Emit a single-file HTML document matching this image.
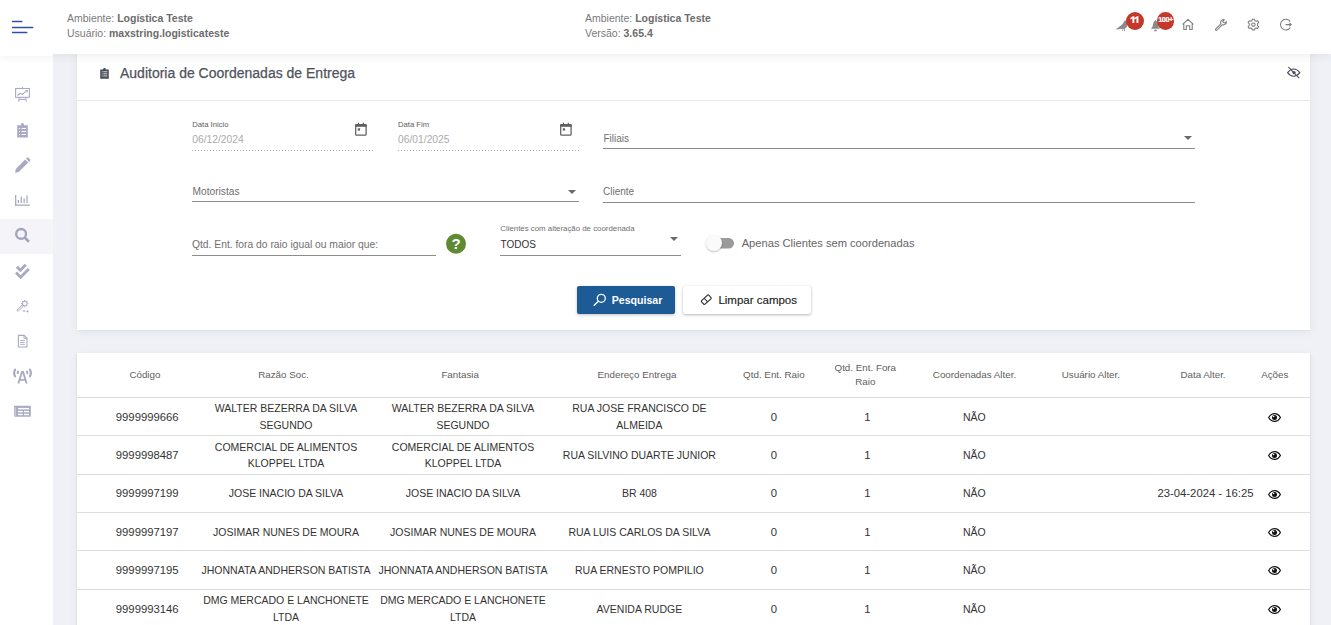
<!DOCTYPE html>
<html><head><meta charset="utf-8">
<style>
*{box-sizing:border-box;margin:0;padding:0}
html,body{width:1331px;height:625px;overflow:hidden}
body{position:relative;background:#f0f1f6;font-family:"Liberation Sans",sans-serif;color:#333}
.a{position:absolute;white-space:nowrap;line-height:1}
#hdr{position:absolute;left:0;top:0;width:1331px;height:54px;background:#fff;box-shadow:0 2px 9px rgba(0,0,0,.07);z-index:5}
#side{position:absolute;left:0;top:54px;width:53px;height:571px;background:#fff;z-index:3}
.card{position:absolute;left:77px;width:1233px;background:#fff;box-shadow:0 1px 1px rgba(0,0,0,.03),0 2px 10px rgba(0,0,0,.06)}
.ul{position:absolute;height:1px;background:#8c8c8c}
.dot{position:absolute;height:1px;background-image:linear-gradient(to right,#a6a6a6 0 1px,transparent 1px 3px);background-size:3px 1px}
.tri{position:absolute;width:0;height:0;border-left:4px solid transparent;border-right:4px solid transparent;border-top:4px solid #6a6a6a}
.hl{color:#7a7a7a}
.hb{color:#6c6c6c;font-weight:bold}
svg{position:absolute;overflow:visible}
.lbl{color:#5c5c5c}
.ph{color:#707070}
.badge{position:absolute;width:18px;height:18px;border-radius:50%;background:#c4372b;color:#fff;font-weight:bold;text-align:center;line-height:18px}
.tr{position:absolute;left:0;width:1233px;border-bottom:1px solid #dedede}
.td{position:absolute;top:0;height:100%;display:flex;align-items:center;justify-content:center;text-align:center;font-size:10.5px;line-height:16.6px;color:#333;padding-top:1px}
.td.num{font-size:11.3px}
.th .td{font-size:9.8px;line-height:13.7px;color:#606060;padding-top:0}
</style></head><body>

<div id="hdr">
  <svg style="left:0;top:0" width="60" height="54">
    <g stroke="#2f50a6" stroke-width="1.4" stroke-linecap="round">
      <line x1="12.5" y1="21.5" x2="21.8" y2="21.5"/>
      <line x1="12.5" y1="27.5" x2="32.8" y2="27.5"/>
      <line x1="12.5" y1="32.5" x2="26.8" y2="32.5"/>
    </g>
  </svg>
  <div class="a" style="left:67px;top:13px;font-size:10.5px"><span class="hl">Ambiente: </span><span class="hb">Logística Teste</span></div>
  <div class="a" style="left:67px;top:28px;font-size:10.5px"><span class="hl">Usuário: </span><span class="hb">maxstring.logisticateste</span></div>
  <div class="a" style="left:585px;top:13px;font-size:10.5px"><span class="hl">Ambiente: </span><span class="hb">Logística Teste</span></div>
  <div class="a" style="left:585px;top:28px;font-size:10.5px"><span class="hl">Versão: </span><span class="hb">3.65.4</span></div>

  <!-- bird -->
  <svg style="left:0;top:0" width="1331" height="54">
    <path d="M1115.6 29.6 L1122.2 24.4 C1123 23.6 1123.6 22.8 1124 21.6 C1124.3 20.6 1125.2 20.2 1126 20.6 L1127.2 22 L1127 26.2 C1126.6 27.4 1125.6 28.2 1124.8 28.6 L1124.8 31 L1124 31 L1124 28.8 L1123.2 28.9 L1123.2 31 L1122.4 31 L1122.4 28.8 C1120 29 1117.8 29.4 1115.6 29.6Z" fill="#8a8a8a"/>
    <!-- bell -->
    <path d="M1155.5 20 C1153.6 21.5 1153 23.5 1152.8 25.8 C1152.6 27 1151.8 27.9 1150.8 28.7 L1160 28.7 C1159 27.9 1158.4 27 1158.2 25.8 C1158 23.5 1157.4 21.5 1155.5 20Z" fill="#8a8a8a"/>
    <ellipse cx="1155.5" cy="30.4" rx="1.4" ry="0.9" fill="#8a8a8a"/>
    <!-- home -->
    <path d="M1182.6 24.4 L1188 19.4 L1193.4 24.4 M1183.8 23.4 V29.5 H1186.3 V25.8 H1189.7 V29.5 H1192.2 V23.4" fill="none" stroke="#7c7c7c" stroke-width="1.05" stroke-linejoin="round"/>
    <!-- wrench -->
    <path d="M1215.6 29.1 L1220.9 23.8 C1220.3 22.4 1220.7 20.9 1221.9 20.1 C1222.7 19.6 1223.6 19.5 1224.4 19.7 L1222.8 21.4 L1223.6 22.6 L1225 22.9 L1226.3 21.5 C1226.5 22.5 1226.2 23.5 1225.4 24.2 C1224.6 24.9 1223.5 25 1222.5 24.7 L1217.2 30 C1216.7 30.4 1216 30.3 1215.6 29.9 C1215.3 29.6 1215.3 29.4 1215.6 29.1Z" fill="none" stroke="#7c7c7c" stroke-width="1.05" stroke-linejoin="round"/>
    <!-- gear -->
    <g transform="translate(1253.4 24.6)" fill="none" stroke="#7c7c7c" stroke-width="1.05" stroke-linejoin="round">
      <path d="M-1.1 -5.4 L1.1 -5.4 L1.5 -3.9 L2.7 -3.3 L4.2 -3.9 L5.3 -2 L4.1 -1 L4.1 1 L5.3 2 L4.2 3.9 L2.7 3.3 L1.5 3.9 L1.1 5.4 L-1.1 5.4 L-1.5 3.9 L-2.7 3.3 L-4.2 3.9 L-5.3 2 L-4.1 1 L-4.1 -1 L-5.3 -2 L-4.2 -3.9 L-2.7 -3.3 L-1.5 -3.9Z"/>
      <circle r="1.7"/>
    </g>
    <!-- logout -->
    <path d="M1290.2 21.6 A5.3 5.3 0 1 0 1290.2 27.6" fill="none" stroke="#7c7c7c" stroke-width="1.05"/>
    <path d="M1285.6 24.6 H1291.2 M1289.4 22.9 L1291.2 24.6 L1289.4 26.3" fill="none" stroke="#7c7c7c" stroke-width="1.05"/>
  </svg>
  <div class="badge" style="left:1126.2px;top:12px"></div>
  <svg style="left:0;top:0;z-index:7" width="1331" height="54"><path d="M1130.4 17.8 L1133 16.2 H1134.3 V23 H1132.4 V18.5 L1130.4 19.6Z M1134.5 17.8 L1137.1 16.2 H1138.4 V23 H1136.5 V18.5 L1134.5 19.6Z" fill="#fff"/></svg>
  <div class="badge" style="left:1156.5px;top:12px;width:17.5px;height:17.5px;font-size:7px;letter-spacing:-0.45px;line-height:16px;text-indent:0.5px;font-size:7.3px;-webkit-text-stroke:0.2px #fff">100+</div>
</div>

<div style="position:absolute;left:0;top:54px;width:53px;height:2px;background:#fff;z-index:6"></div>
<div id="side">
  <div style="position:absolute;left:0;top:165px;width:53px;height:35px;background:#f5f5f9"></div>
  <svg style="left:0;top:-54px" width="53" height="625">
    <g fill="none" stroke="#a8aac3" stroke-width="1.1">
      <!-- presentation -->
      <rect x="15.6" y="88.5" width="13.8" height="8.8"/>
      <line x1="22.5" y1="87" x2="22.5" y2="88.5"/>
      <polyline points="17.4,95.5 20.2,93.2 22.3,94.4 26.6,90.8"/>
      <line x1="19.5" y1="99.4" x2="25.5" y2="99.4"/>
      <line x1="19.3" y1="97.5" x2="18.7" y2="101.6"/>
      <line x1="25.7" y1="97.5" x2="26.3" y2="101.6"/>
    </g>
    <path d="M25.2 90 L27.8 90 L27.8 92.6Z" fill="#a8aac3"/>
    <!-- clipboard -->
    <path d="M17.2 125.2 H21 C21 123.9 21.6 123 22.5 123 C23.4 123 24 123.9 24 125.2 H27.8 V137.6 H17.2Z" fill="#a8aac3"/>
    <g fill="#fff"><rect x="19" y="128" width="1" height="1"/><rect x="19" y="131" width="1" height="1"/><rect x="19" y="134" width="1" height="1"/>
    <rect x="21.5" y="128" width="4.5" height="1"/><rect x="21.5" y="131" width="4.5" height="1"/><rect x="21.5" y="134" width="4.5" height="1"/></g>
    <!-- pencil -->
    <path d="M15.1 172.7 L15.8 169 L25.2 159.6 L28.2 162.6 L18.8 172Z" fill="#a8aac3"/>
    <path d="M26 158.8 L26.9 157.9 C27.4 157.4 28.1 157.4 28.6 157.9 L30 159.3 C30.5 159.8 30.5 160.5 30 161 L29.1 161.9Z" fill="#a8aac3"/>
    <!-- bar chart -->
    <g fill="#a8aac3">
      <rect x="15" y="195" width="1.3" height="10.8"/>
      <rect x="15" y="204.5" width="15" height="1.3"/>
      <rect x="17.7" y="200" width="1.3" height="3"/>
      <rect x="20.6" y="196.5" width="1.3" height="6.5"/>
      <rect x="23.5" y="198.5" width="1.3" height="4.5"/>
      <rect x="26.4" y="195.5" width="1.3" height="7.5"/>
    </g>
    <!-- search -->
    <circle cx="21.1" cy="233.9" r="4.9" fill="none" stroke="#a2a4bf" stroke-width="2.4"/>
    <line x1="24.8" y1="237.6" x2="28.9" y2="241.7" stroke="#a2a4bf" stroke-width="2.7"/>
    <!-- double check -->
    <polyline points="16.8,266.8 20.3,270.3 25.8,264.8" fill="none" stroke="#a8aac3" stroke-width="2.8"/>
    <polyline points="16,272.6 20.6,277.2 28.8,269" fill="none" stroke="#a8aac3" stroke-width="2.8"/>
    <!-- magic wand -->
    <g fill="none" stroke="#a8aac3" stroke-width="1">
      <path d="M22.6 304.6 L16.9 310.3 L18 311.4 L23.7 305.7"/>
      <circle cx="24.7" cy="303.6" r="2.3"/>
    </g>
    <g stroke="#a8aac3" stroke-width="1.2">
      <line x1="24.7" y1="300" x2="24.7" y2="301"/><line x1="24.7" y1="306.2" x2="24.7" y2="307.2"/>
      <line x1="21.1" y1="303.6" x2="22.1" y2="303.6"/><line x1="27.3" y1="303.6" x2="28.3" y2="303.6"/>
      <line x1="22.2" y1="301.1" x2="22.9" y2="301.8"/><line x1="26.5" y1="305.4" x2="27.2" y2="306.1"/>
      <line x1="27.2" y1="301.1" x2="26.5" y2="301.8"/><line x1="22.9" y1="305.4" x2="22.2" y2="306.1"/>
    </g>
    <path d="M24 309.5 L24.5 310.5 L25.5 311 L24.5 311.5 L24 312.5 L23.5 311.5 L22.5 311 L23.5 310.5Z M27.5 310 L28 311 L29 311.5 L28 312 L27.5 313 L27 312 L26 311.5 L27 311Z" fill="#a8aac3"/>
    <!-- document -->
    <path d="M18.4 335.4 H24.2 L27 338.2 V347 H18.4Z" fill="none" stroke="#a8aac3" stroke-width="1.1"/>
    <path d="M24 335.5 V338.4 H27" fill="none" stroke="#a8aac3" stroke-width="1"/>
    <g fill="#a8aac3"><rect x="20.2" y="340.1" width="4.6" height="0.9"/><rect x="20.2" y="342" width="4.6" height="0.9"/><rect x="20.2" y="343.9" width="4.6" height="0.9"/></g>
    <!-- antenna -->
    <g fill="none" stroke="#a8aac3" stroke-width="2" stroke-linecap="round">
      <path d="M15.1 369.6 C13.8 371.7 13.8 374.3 15.1 376.4"/>
      <path d="M29.9 369.6 C31.2 371.7 31.2 374.3 29.9 376.4"/>
      <path d="M18 371.5 L17.7 373.2"/>
      <path d="M27 371.5 L27.3 373.2"/>
    </g>
    <path d="M21.3 371 H23.7 L27.6 383.6 H25.6 L24.8 380.8 H20.2 L19.4 383.6 H17.4Z M20.8 379 H24.2 L22.5 373.2Z" fill="#a8aac3" fill-rule="evenodd"/>
    <!-- table -->
    <rect x="14.2" y="405.8" width="16.6" height="10.9" rx="0.8" fill="#a8aac3"/>
    <g fill="#fff">
      <rect x="18" y="407.9" width="11" height="1.5"/>
      <rect x="18" y="410.9" width="4.8" height="1.4"/>
      <rect x="24" y="410.9" width="5" height="1.4"/>
      <rect x="18" y="413.8" width="4.8" height="1.4"/>
      <rect x="24" y="413.8" width="5" height="1.4"/>
      <rect x="15.3" y="407.5" width="0.8" height="8.2" opacity="0.55"/>
    </g>
  </svg>
</div>

<!-- card 1 -->
<div class="card" style="top:40px;height:290px">
  <div style="position:absolute;left:0;top:60px;width:1233px;height:1px;background:#e6e7ec"></div>
</div>
<svg style="left:0;top:0;z-index:2" width="1331" height="625">
  <!-- clipboard title icon -->
  <path d="M100.2 69.6 H103 C103 68.7 103.6 68 104.5 68 C105.4 68 106 68.7 106 69.6 H108.8 V78.8 H100.2Z" fill="#4b4e58"/>
  <g fill="#fff" opacity="0.85"><rect x="101.7" y="71.3" width="0.9" height="0.9"/><rect x="101.7" y="73.4" width="0.9" height="0.9"/><rect x="101.7" y="75.5" width="0.9" height="0.9"/><rect x="103.3" y="71.3" width="4" height="0.9"/><rect x="103.3" y="73.4" width="4" height="0.9"/><rect x="103.3" y="75.5" width="4" height="0.9"/></g>
  <!-- eye slash -->
  <g fill="none" stroke="#4b4e58" stroke-width="1.1">
    <path d="M1287.6 72.6 C1289.4 70.2 1291.5 69 1293.7 69 C1295.9 69 1298 70.2 1299.8 72.6 C1298 75 1295.9 76.2 1293.7 76.2 C1291.5 76.2 1289.4 75 1287.6 72.6Z"/>
    <line x1="1288.4" y1="67.2" x2="1299.2" y2="78.2"/>
  </g>
  <circle cx="1294" cy="72.6" r="1.6" fill="#4b4e58"/>
  <!-- calendar icons -->
  <g fill="none" stroke="#5f5f5f" stroke-width="1.25">
    <rect x="355.7" y="124.7" width="10.4" height="10.4" rx="0.9"/>
    <rect x="560.7" y="124.7" width="10.4" height="10.4" rx="0.9"/>
  </g>
  <g fill="#5f5f5f">
    <rect x="355.2" y="124.2" width="11.4" height="2.6"/>
    <rect x="357.9" y="122.7" width="1.2" height="2"/><rect x="362.7" y="122.7" width="1.2" height="2"/>
    <rect x="357.8" y="128.3" width="2.3" height="2.3"/>
    <rect x="560.2" y="124.2" width="11.4" height="2.6"/>
    <rect x="562.9" y="122.7" width="1.2" height="2"/><rect x="567.7" y="122.7" width="1.2" height="2"/>
    <rect x="562.8" y="128.3" width="2.3" height="2.3"/>
  </g>
  <!-- help circle -->
  <circle cx="456" cy="243.8" r="10" fill="#5e8a31"/>
  <!-- toggle -->
  <rect x="708" y="238" width="26" height="10.6" rx="5.3" fill="#9a9a9a"/>
</svg>
<div style="position:absolute;left:705.7px;top:235px;width:16px;height:16px;border-radius:50%;background:#fafafa;box-shadow:0 1px 2px rgba(0,0,0,.25);z-index:2"></div>
<div class="a" style="left:450.6px;top:235.6px;width:10.8px;text-align:center;font-size:15px;font-weight:bold;color:#fff;z-index:3">?</div>

<!-- form text -->
<div style="position:absolute;left:0;top:0;z-index:2">
  <div class="a" style="left:120px;top:66px;font-size:14px;color:#50535c;-webkit-text-stroke:0.25px #50535c">Auditoria de Coordenadas de Entrega</div>

  <div class="a lbl" style="left:192.2px;top:120.7px;font-size:7.7px">Data Inicio</div>
  <div class="a" style="left:192.2px;top:134.7px;font-size:10.3px;color:#ababab">06/12/2024</div>
  <div class="dot" style="left:192px;top:150px;width:181px"></div>

  <div class="a lbl" style="left:398px;top:120.7px;font-size:7.7px">Data Fim</div>
  <div class="a" style="left:398px;top:134.7px;font-size:10.3px;color:#ababab">06/01/2025</div>
  <div class="dot" style="left:398px;top:150px;width:181px"></div>

  <div class="a ph" style="left:603.4px;top:133.9px;font-size:10px">Filiais</div>
  <div class="ul" style="left:603px;top:148px;width:592px"></div>
  <div class="tri" style="left:1184px;top:136px"></div>

  <div class="a ph" style="left:192.5px;top:187px;font-size:10.2px">Motoristas</div>
  <div class="ul" style="left:192px;top:201px;width:387px"></div>
  <div class="tri" style="left:568px;top:190px"></div>

  <div class="a ph" style="left:603px;top:186.5px;font-size:10px">Cliente</div>
  <div class="ul" style="left:603px;top:202px;width:592px"></div>

  <div class="a ph" style="left:192px;top:239.5px;font-size:10.3px">Qtd. Ent. fora do raio igual ou maior que:</div>
  <div class="ul" style="left:192px;top:255px;width:244px"></div>

  <div class="a ph" style="left:500.3px;top:225px;font-size:7.85px">Clientes com alteração de coordenada</div>
  <div class="a" style="left:500.5px;top:240px;font-size:10px;color:#333">TODOS</div>
  <div class="ul" style="left:500px;top:255px;width:181px"></div>
  <div class="tri" style="left:669.5px;top:237px;border-left-width:4.8px;border-right-width:4.8px;border-top-width:4px"></div>

  <div class="a" style="left:741.7px;top:237.6px;font-size:11.15px;color:#666">Apenas Clientes sem coordenadas</div>

  <!-- buttons -->
  <div style="position:absolute;left:577px;top:286px;width:98px;height:28px;background:#1d5b97;border-radius:2px;box-shadow:0 1px 3px rgba(0,0,0,.25)"></div>
  <svg style="left:0;top:0" width="1331" height="625">
    <circle cx="601.3" cy="298.3" r="4" fill="none" stroke="#fff" stroke-width="1.3"/>
    <line x1="598.4" y1="301.2" x2="594.2" y2="305.2" stroke="#fff" stroke-width="1.4" stroke-linecap="round"/>
  </svg>
  <div class="a" style="left:611.7px;top:295.4px;font-size:10.6px;font-weight:bold;color:#fff">Pesquisar</div>

  <div style="position:absolute;left:683px;top:286px;width:128px;height:28px;background:#fff;border-radius:2px;box-shadow:0 1px 3px rgba(0,0,0,.28),0 0 1px rgba(0,0,0,.10)"></div>
  <svg style="left:0;top:0" width="1331" height="625">
    <g transform="translate(706.3 299.7) rotate(-42)"><rect x="-4.9" y="-2.5" width="9.8" height="5" rx="0.9" fill="none" stroke="#222" stroke-width="1.05"/><line x1="-0.6" y1="-2.5" x2="-0.6" y2="2.5" stroke="#222" stroke-width="1"/></g>
    
  </svg>
  <div class="a" style="left:718.4px;top:295.4px;font-size:11.5px;color:#222;-webkit-text-stroke:0.15px #222">Limpar campos</div>
</div>

<!-- card 2 -->
<div class="card" style="top:353px;height:290px;overflow:hidden;box-shadow:0 1px 2px rgba(0,0,0,.13),0 2px 9px rgba(0,0,0,.05)">
<div style="position:absolute;left:0;top:-353px;width:1233px;height:625px">
<div class="tr th" style="top:353px;height:44.8px">
<div class="td" style="left:-42.1px;width:220px">Código</div>
<div class="td" style="left:96.5px;width:220px">Razão Soc.</div>
<div class="td" style="left:273.2px;width:220px">Fantasia</div>
<div class="td" style="left:450.0px;width:220px">Endereço Entrega</div>
<div class="td" style="left:586.9px;width:220px">Qtd. Ent. Raio</div>
<div class="td" style="left:678.3px;width:220px">Qtd. Ent. Fora<br>Raio</div>
<div class="td" style="left:787.5px;width:220px">Coordenadas Alter.</div>
<div class="td" style="left:903.9px;width:220px">Usuário Alter.</div>
<div class="td" style="left:1016.0px;width:220px">Data Alter.</div>
<div class="td" style="left:1087.8px;width:220px">Ações</div>
</div>
<div class="tr" style="top:397.8px;height:38.4px">
<div class="td num" style="left:-39.8px;width:220px">9999999666</div>
<div class="td" style="left:99.0px;width:220px">WALTER BEZERRA DA SILVA<br>SEGUNDO</div>
<div class="td" style="left:276.0px;width:220px">WALTER BEZERRA DA SILVA<br>SEGUNDO</div>
<div class="td" style="left:452.4px;width:220px">RUA JOSE FRANCISCO DE<br>ALMEIDA</div>
<div class="td num" style="left:586.9px;width:220px">0</div>
<div class="td num" style="left:680.3px;width:220px">1</div>
<div class="td" style="left:787.4px;width:220px">NÃO</div>
<div class="td" style="left:1087.5px;width:220px;padding-top:1.8px"><svg width="13" height="9" viewBox="0 0 13 9" style="position:static"><path d="M0.6 4.5C2 1.9 4.1 0.6 6.5 0.6S11 1.9 12.4 4.5C11 7.1 8.9 8.4 6.5 8.4S2 7.1 0.6 4.5Z" fill="none" stroke="#111" stroke-width="1.2"/><circle cx="6.5" cy="4.5" r="2.5" fill="#111"/><circle cx="5.6" cy="3.5" r="0.8" fill="#fff"/></svg></div>
</div>
<div class="tr" style="top:436.2px;height:38.4px">
<div class="td num" style="left:-39.8px;width:220px">9999998487</div>
<div class="td" style="left:99.0px;width:220px">COMERCIAL DE ALIMENTOS<br>KLOPPEL LTDA</div>
<div class="td" style="left:276.0px;width:220px">COMERCIAL DE ALIMENTOS<br>KLOPPEL LTDA</div>
<div class="td" style="left:452.4px;width:220px">RUA SILVINO DUARTE JUNIOR</div>
<div class="td num" style="left:586.9px;width:220px">0</div>
<div class="td num" style="left:680.3px;width:220px">1</div>
<div class="td" style="left:787.4px;width:220px">NÃO</div>
<div class="td" style="left:1087.5px;width:220px;padding-top:1.8px"><svg width="13" height="9" viewBox="0 0 13 9" style="position:static"><path d="M0.6 4.5C2 1.9 4.1 0.6 6.5 0.6S11 1.9 12.4 4.5C11 7.1 8.9 8.4 6.5 8.4S2 7.1 0.6 4.5Z" fill="none" stroke="#111" stroke-width="1.2"/><circle cx="6.5" cy="4.5" r="2.5" fill="#111"/><circle cx="5.6" cy="3.5" r="0.8" fill="#fff"/></svg></div>
</div>
<div class="tr" style="top:474.6px;height:38.4px">
<div class="td num" style="left:-39.8px;width:220px">9999997199</div>
<div class="td" style="left:99.0px;width:220px">JOSE INACIO DA SILVA</div>
<div class="td" style="left:276.0px;width:220px">JOSE INACIO DA SILVA</div>
<div class="td" style="left:452.4px;width:220px">BR 408</div>
<div class="td num" style="left:586.9px;width:220px">0</div>
<div class="td num" style="left:680.3px;width:220px">1</div>
<div class="td" style="left:787.4px;width:220px">NÃO</div>
<div class="td num" style="left:1018.5px;width:220px">23-04-2024 - 16:25</div>
<div class="td" style="left:1087.5px;width:220px;padding-top:1.8px"><svg width="13" height="9" viewBox="0 0 13 9" style="position:static"><path d="M0.6 4.5C2 1.9 4.1 0.6 6.5 0.6S11 1.9 12.4 4.5C11 7.1 8.9 8.4 6.5 8.4S2 7.1 0.6 4.5Z" fill="none" stroke="#111" stroke-width="1.2"/><circle cx="6.5" cy="4.5" r="2.5" fill="#111"/><circle cx="5.6" cy="3.5" r="0.8" fill="#fff"/></svg></div>
</div>
<div class="tr" style="top:513.0px;height:38.4px">
<div class="td num" style="left:-39.8px;width:220px">9999997197</div>
<div class="td" style="left:99.0px;width:220px">JOSIMAR NUNES DE MOURA</div>
<div class="td" style="left:276.0px;width:220px">JOSIMAR NUNES DE MOURA</div>
<div class="td" style="left:452.4px;width:220px">RUA LUIS CARLOS DA SILVA</div>
<div class="td num" style="left:586.9px;width:220px">0</div>
<div class="td num" style="left:680.3px;width:220px">1</div>
<div class="td" style="left:787.4px;width:220px">NÃO</div>
<div class="td" style="left:1087.5px;width:220px;padding-top:1.8px"><svg width="13" height="9" viewBox="0 0 13 9" style="position:static"><path d="M0.6 4.5C2 1.9 4.1 0.6 6.5 0.6S11 1.9 12.4 4.5C11 7.1 8.9 8.4 6.5 8.4S2 7.1 0.6 4.5Z" fill="none" stroke="#111" stroke-width="1.2"/><circle cx="6.5" cy="4.5" r="2.5" fill="#111"/><circle cx="5.6" cy="3.5" r="0.8" fill="#fff"/></svg></div>
</div>
<div class="tr" style="top:551.4px;height:38.4px">
<div class="td num" style="left:-39.8px;width:220px">9999997195</div>
<div class="td" style="left:99.0px;width:220px">JHONNATA ANDHERSON BATISTA</div>
<div class="td" style="left:276.0px;width:220px">JHONNATA ANDHERSON BATISTA</div>
<div class="td" style="left:452.4px;width:220px">RUA ERNESTO POMPILIO</div>
<div class="td num" style="left:586.9px;width:220px">0</div>
<div class="td num" style="left:680.3px;width:220px">1</div>
<div class="td" style="left:787.4px;width:220px">NÃO</div>
<div class="td" style="left:1087.5px;width:220px;padding-top:1.8px"><svg width="13" height="9" viewBox="0 0 13 9" style="position:static"><path d="M0.6 4.5C2 1.9 4.1 0.6 6.5 0.6S11 1.9 12.4 4.5C11 7.1 8.9 8.4 6.5 8.4S2 7.1 0.6 4.5Z" fill="none" stroke="#111" stroke-width="1.2"/><circle cx="6.5" cy="4.5" r="2.5" fill="#111"/><circle cx="5.6" cy="3.5" r="0.8" fill="#fff"/></svg></div>
</div>
<div class="tr" style="top:589.8px;height:38.4px">
<div class="td num" style="left:-39.8px;width:220px">9999993146</div>
<div class="td" style="left:99.0px;width:220px">DMG MERCADO E LANCHONETE<br>LTDA</div>
<div class="td" style="left:276.0px;width:220px">DMG MERCADO E LANCHONETE<br>LTDA</div>
<div class="td" style="left:452.4px;width:220px">AVENIDA RUDGE</div>
<div class="td num" style="left:586.9px;width:220px">0</div>
<div class="td num" style="left:680.3px;width:220px">1</div>
<div class="td" style="left:787.4px;width:220px">NÃO</div>
<div class="td" style="left:1087.5px;width:220px;padding-top:1.8px"><svg width="13" height="9" viewBox="0 0 13 9" style="position:static"><path d="M0.6 4.5C2 1.9 4.1 0.6 6.5 0.6S11 1.9 12.4 4.5C11 7.1 8.9 8.4 6.5 8.4S2 7.1 0.6 4.5Z" fill="none" stroke="#111" stroke-width="1.2"/><circle cx="6.5" cy="4.5" r="2.5" fill="#111"/><circle cx="5.6" cy="3.5" r="0.8" fill="#fff"/></svg></div>
</div>
</div>
</div>

</body></html>
